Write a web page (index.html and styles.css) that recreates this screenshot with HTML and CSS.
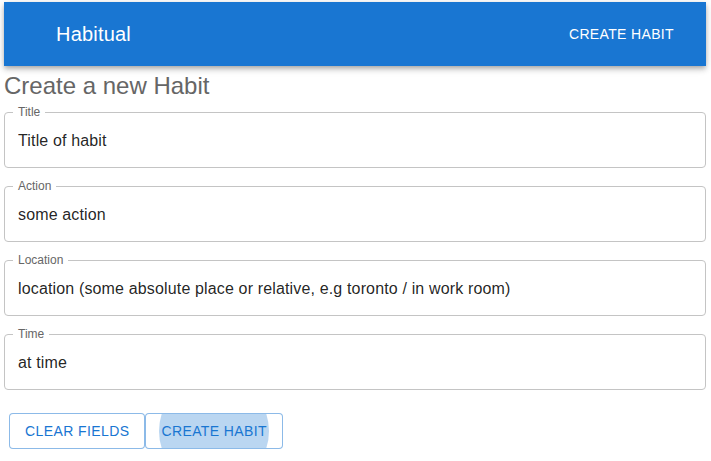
FILE: index.html
```html
<!DOCTYPE html>
<html lang="en">
<head>
<meta charset="utf-8">
<title>Habitual</title>
<link rel="stylesheet" href="styles.css">
</head>
<body>
<div class="page">
  <header class="appbar">
    <div class="brand">Habitual</div>
    <button class="nav-btn" type="button">Create Habit</button>
  </header>
  <main class="content">
    <h1 class="heading">Create a new Habit</h1>
    <form class="form">
      <div class="field">
        <label class="field-label">Title</label>
        <input class="field-input" type="text" value="Title of habit">
      </div>
      <div class="field">
        <label class="field-label">Action</label>
        <input class="field-input" type="text" value="some action">
      </div>
      <div class="field">
        <label class="field-label">Location</label>
        <input class="field-input" type="text" value="location (some absolute place or relative, e.g toronto / in work room)">
      </div>
      <div class="field">
        <label class="field-label">Time</label>
        <input class="field-input" type="text" value="at time">
      </div>
      <div class="actions">
        <button class="btn" type="button">Clear Fields</button>
        <button class="btn btn-active" type="button">Create Habit<span class="ripple"></span></button>
      </div>
    </form>
  </main>
</div>
</body>
</html>
```

FILE: styles.css
```css
* {
  box-sizing: border-box;
}

html, body {
  margin: 0;
  padding: 0;
  background: #ffffff;
  font-family: "Liberation Sans", Arial, sans-serif;
}

.page {
  padding: 2px 5px 0 4px;
}

.appbar {
  height: 64px;
  background: #1976d2;
  color: #ffffff;
  display: flex;
  align-items: center;
  justify-content: space-between;
  padding: 0 24px 0 52px;
  box-shadow: 0px 2px 4px -1px rgba(0,0,0,0.2), 0px 4px 5px 0px rgba(0,0,0,0.14), 0px 1px 10px 0px rgba(0,0,0,0.12);
}

.brand {
  font-size: 20px;
  line-height: 32px;
  letter-spacing: 0.2px;
}

.nav-btn {
  background: none;
  border: none;
  color: #ffffff;
  font-family: inherit;
  font-size: 14px;
  letter-spacing: 0.35px;
  text-transform: uppercase;
  padding: 6px 8px;
  line-height: 24px;
  cursor: pointer;
}

.heading {
  margin: 4px 0 10px 0;
  font-size: 24px;
  line-height: 32px;
  font-weight: 400;
  color: #666666;
}

.form {
  display: flex;
  flex-direction: column;
  gap: 18px;
}

.field {
  position: relative;
  height: 56px;
  border: 1px solid #c4c4c4;
  border-radius: 4px;
  display: flex;
  align-items: center;
  padding: 0 13px;
}

.field-label {
  position: absolute;
  left: 8px;
  top: -7px;
  padding: 0 5px;
  background: #ffffff;
  font-size: 12px;
  line-height: 12px;
  color: #666666;
}

.field-input {
  width: 100%;
  border: none;
  outline: none;
  padding: 0;
  margin: 0;
  background: transparent;
  font-family: inherit;
  font-size: 16px;
  line-height: 23px;
  height: 23px;
  letter-spacing: 0.15px;
  color: rgba(0,0,0,0.87);
}

.actions {
  display: flex;
  padding-left: 5px;
  margin-top: 5px;
}

.btn {
  position: relative;
  overflow: hidden;
  height: 36px;
  padding: 5px 15px;
  border: 1px solid rgba(25,118,210,0.5);
  border-radius: 4px;
  background: #ffffff;
  color: #1976d2;
  font-family: inherit;
  font-size: 14px;
  letter-spacing: 0.4px;
  text-transform: uppercase;
  line-height: 24px;
  cursor: pointer;
}

.ripple {
  position: absolute;
  left: 50%;
  top: 50%;
  width: 110px;
  height: 110px;
  margin: -55px 0 0 -55px;
  border-radius: 50%;
  background: #1976d2;
  opacity: 0.3;
}
```
